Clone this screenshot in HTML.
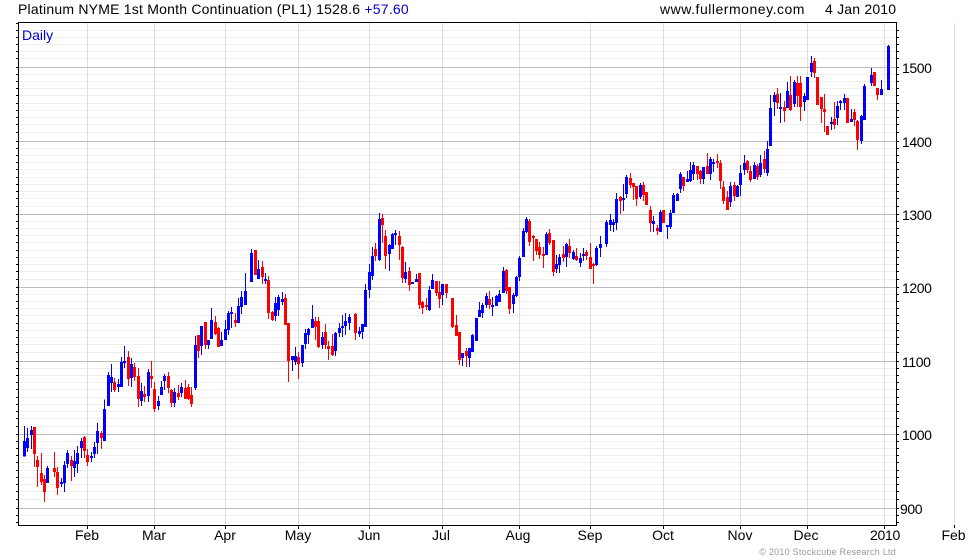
<!DOCTYPE html>
<html>
<head>
<meta charset="utf-8">
<title>Platinum NYME</title>
<style>
html,body{margin:0;padding:0;background:#fff;width:980px;height:560px;overflow:hidden}
svg{display:block}
text{font-family:"Liberation Sans",Arial,sans-serif;font-size:14px;fill:#000}
.n{letter-spacing:-.4px}
.bw{stroke:#00f;stroke-width:3;fill:none}
.bb{stroke:#00f;stroke-width:9;fill:none}
.rw{stroke:#f00;stroke-width:3;fill:none}
.rb{stroke:#f00;stroke-width:9;fill:none}
</style>
</head>
<body>
<svg width="980" height="560" viewBox="0 0 980 560" xmlns="http://www.w3.org/2000/svg" shape-rendering="crispEdges">
<path fill="none" stroke="#eee" d="M19 30.5H896M19 37.5H896M19 44.5H896M19 51.5H896M19 58.5H896M19 74.5H896M19 81.5H896M19 88.5H896M19 95.5H896M19 103.5H896M19 110.5H896M19 117.5H896M19 124.5H896M19 132.5H896M19 148.5H896M19 155.5H896M19 162.5H896M19 169.5H896M19 177.5H896M19 184.5H896M19 191.5H896M19 198.5H896M19 206.5H896M19 221.5H896M19 228.5H896M19 235.5H896M19 242.5H896M19 250.5H896M19 257.5H896M19 264.5H896M19 271.5H896M19 279.5H896M19 294.5H896M19 301.5H896M19 308.5H896M19 315.5H896M19 323.5H896M19 330.5H896M19 337.5H896M19 344.5H896M19 352.5H896M19 368.5H896M19 375.5H896M19 382.5H896M19 389.5H896M19 397.5H896M19 404.5H896M19 411.5H896M19 418.5H896M19 426.5H896M19 441.5H896M19 448.5H896M19 455.5H896M19 462.5H896M19 470.5H896M19 477.5H896M19 484.5H896M19 491.5H896M19 499.5H896M19 515.5H896"/>
<path fill="none" stroke="#ddd" d="M87.5 23V525M154.5 23V525M225.5 23V525M298.5 23V525M369.5 23V525M442.5 23V525M519.5 23V525M590.5 23V525M663.5 23V525M740.5 23V525M807.5 23V525M884.5 23V525M954.5 23V525"/>
<path fill="none" stroke="#bbb" d="M19 67.5H896M19 141.5H896M19 214.5H896M19 287.5H896M19 361.5H896M19 434.5H896M19 508.5H896"/>

<g transform="translate(20.1667 340) scale(.3333333)">
<path class="bw" d="M13 258V350M22 264V336M34 258V327M82 378V429M124 414V441M133 363V456M142 330V384M163 330V411M172 318V399M184 294V354M214 336V366M223 306V354M232 249V342M253 178V303M265 96V198M274 72V156M295 117V156M304 51V141M313 18V84M334 54V141M364 129V198M385 87V186M415 168V210M424 123V165M433 102V150M463 144V201M484 129V171"/>
<path class="bb" d="M13 303V350M22 294V324M34 270V285M82 384V429M124 426V432M133 375V429M142 339V372M163 363V384M172 339V372M184 303V324M214 348V354M223 321V342M232 273V309M253 207V303M265 105V198M274 111V129M295 132V141M304 66V141M313 63V69M334 72V114M364 153V183M385 96V168M415 183V198M424 141V165M433 108V123M463 156V189M484 141V159"/>
<path class="rw" d="M43 261V381M52 348V441M64 339V435M73 405V486M103 336V411M112 381V465M154 348V423M193 288V354M202 327V378M244 273V327M283 114V156M325 33V138M343 69V123M355 84V201M373 138V186M394 63V144M403 126V216M445 96V159M454 147V201M475 135V180M496 120V177M505 132V180M514 141V201"/>
<path class="rb" d="M43 261V342M52 360V381M64 399V426M73 417V456M103 384V396M112 396V444M154 360V378M193 291V333M202 345V366M244 279V294M283 126V150M325 51V117M343 81V111M355 108V177M373 162V171M394 108V117M403 147V207M445 108V144M454 150V189M475 159V171M496 144V177M505 141V177M514 165V192"/>
</g>

<g transform="translate(190.1667 240) scale(.3333333)">
<path class="bw" d="M16 288V450M34 258V345M55 300V327M64 204V297M94 276V318M106 240V300M115 213V285M124 201V264M145 174V249M154 153V222M166 99V195M184 27V126M205 60V117M226 99V132M256 171V243M265 165V228M277 156V195M307 348V393M316 321V375M337 315V381M346 267V327M355 264V312M367 195V264M397 276V327M436 276V348M448 249V291M457 225V291M466 219V285M478 222V270M508 261V291M517 252V297"/>
<path class="bb" d="M16 315V444M34 258V318M55 300V315M64 240V297M94 300V318M106 267V300M115 219V270M124 216V222M145 198V249M154 171V201M166 153V195M184 39V126M205 87V117M226 117V123M256 189V228M265 171V210M277 177V186M307 348V360M316 348V366M337 315V369M346 279V312M355 267V285M367 237V264M397 291V315M436 279V333M448 264V279M457 258V264M466 243V258M478 231V249M508 273V282M517 252V276"/>
<path class="rw" d="M25 285V354M46 246V327M76 228V285M85 261V321M136 219V261M196 30V105M217 63V132M235 108V237M247 213V243M286 162V255M295 249V426M325 336V417M376 231V300M385 231V324M406 252V327M415 303V360M427 282V348M496 219V300"/>
<path class="rb" d="M25 285V333M46 246V315M76 246V282M85 264V321M136 240V249M196 30V105M217 81V111M235 120V219M247 216V240M286 174V255M295 249V363M325 351V372M376 243V261M385 243V321M406 276V315M415 318V327M427 318V345M496 222V279"/>
</g>

<g transform="translate(360.1667 200) scale(.3333333)">
<path class="bw" d="M16 252V381M28 192V294M37 141V240M58 39V183M88 132V213M97 99V147M106 90V135M136 186V249M157 246V252M169 222V246M208 258V333M217 222V267M247 252V315M307 459V498M328 444V501M337 402V456M349 354V423M358 306V351M367 309V354M379 279V324M397 291V348M409 285V318M418 270V306M430 201V279M460 279V339M469 228V291M478 168V243M490 84V171M499 51V99M559 96V165"/>
<path class="bb" d="M16 270V381M28 216V270M37 168V228M58 57V180M88 135V162M97 102V147M106 99V105M136 216V237M157 246V252M169 237V246M208 270V330M217 240V267M247 252V285M307 459V474M328 444V474M337 405V456M349 354V423M358 330V351M367 315V339M379 288V315M397 315V321M409 288V318M418 282V306M430 213V279M460 285V312M469 231V288M478 174V231M490 93V171M499 57V96M559 102V165"/>
<path class="rw" d="M46 129V183M67 42V129M76 90V207M118 93V180M127 138V249M148 201V273M178 219V327M187 303V342M199 294V330M229 243V288M238 243V324M259 252V294M277 294V384M289 345V408M298 396V495M319 444V501M388 273V327M439 207V282M448 261V342M508 57V138M520 105V183M529 117V165M538 126V177"/>
<path class="rb" d="M46 147V168M67 54V75M76 108V168M118 108V135M127 141V234M148 213V255M178 219V315M187 306V324M199 315V321M229 243V279M238 276V297M259 252V279M277 294V381M289 375V408M298 396V480M319 453V468M388 297V315M439 210V273M448 261V327M508 63V126M520 108V114M529 117V153M538 141V165"/>
</g>

<g transform="translate(540.1667 160) scale(.3333333)">
<path class="bw" d="M19 216V285M49 285V339M58 282V339M79 249V321M100 270V300M121 279V321M130 264V303M169 258V318M181 228V291M199 180V261M211 162V213M220 177V216M229 99V210M250 72V153M259 45V114M301 69V117M340 168V216M361 150V216M382 195V237M391 150V207M400 99V159M412 99V123M421 36V99"/>
<path class="bb" d="M19 222V285M49 312V327M58 291V315M79 252V291M100 276V297M121 294V309M130 282V288M169 264V315M181 252V264M199 186V252M211 180V195M220 186V195M229 117V189M250 114V120M259 51V102M301 75V111M340 183V192M361 156V216M382 195V201M391 159V201M400 105V159M412 102V123M421 42V87"/>
<path class="rw" d="M10 261V324M28 207V255M40 240V348M70 258V306M88 237V294M109 264V303M139 270V300M151 249V327M160 309V372M241 108V162M271 39V84M280 69V120M289 78V138M310 66V123M319 96V135M331 138V216M352 195V225M370 150V189"/>
<path class="rb" d="M10 282V288M28 219V249M40 240V336M70 282V294M88 258V279M109 288V300M139 276V288M151 291V327M160 312V318M241 111V123M271 54V75M280 69V81M289 78V117M310 75V105M319 96V135M331 150V189M352 204V213M370 150V189"/>
</g>

<g transform="translate(680.1667 130) scale(.3333333)">
<path class="bw" d="M22 123V156M31 96V156M40 96V150M70 111V162M91 81V150M100 87V126"/>
<path class="bb" d="M22 147V156M31 120V153M40 105V132M70 111V147M91 87V132M100 96V102"/>
<path class="rw" d="M10 141V183M52 108V150M61 120V162M82 69V132M112 72V114"/>
<path class="rb" d="M10 141V168M52 108V132M61 123V147M82 108V132M112 93V99"/>
</g>

<g transform="translate(710.1667 40) scale(.3333333)">
<path class="bw" d="M61 426V501M82 435V471M91 375V468M103 345V405M133 366V417M151 345V411M172 303V408M181 165V318M193 156V228M211 159V249M232 126V204M253 120V201M283 159V213M292 111V180M304 48V111M364 231V270M382 183V255M391 180V210M403 162V210M424 207V246M454 225V312M463 132V240M484 84V138M514 120V165M535 15V150"/>
<path class="bb" d="M61 438V486M82 438V471M91 399V435M103 369V390M133 375V417M151 369V405M172 327V399M181 204V318M193 165V186M211 201V207M232 153V204M253 126V192M283 168V186M292 111V180M304 69V96M364 246V252M382 198V234M391 183V189M403 174V189M424 237V246M454 228V303M463 138V240M484 105V129M514 147V165M535 18V150"/>
<path class="rw" d="M31 360V447M40 423V492M52 453V510M73 426V483M112 360V399M121 378V426M142 372V420M163 333V399M202 144V207M223 183V246M241 108V213M262 108V201M271 108V243M313 54V114M322 111V195M334 171V249M343 162V276M352 258V285M373 186V267M412 174V249M433 207V258M442 240V330M493 96V138M502 144V180"/>
<path class="rb" d="M31 369V423M40 441V483M52 471V510M73 435V468M112 363V390M121 393V420M142 378V411M163 357V387M202 162V189M223 201V213M241 165V210M262 129V168M271 129V201M313 63V99M322 111V195M334 171V207M343 207V216M352 258V285M373 237V255M412 174V249M433 216V240M442 243V300M493 96V138M502 144V165"/>
</g>

<path fill="none" stroke="#000" d="M18.5 22V525.5M896.5 22V525.5M18 22.5H897M18 525.5H897"/>
<path fill="none" stroke="#000" d="M16 23.5H18M16 30.5H18M16 37.5H18M16 44.5H18M16 51.5H18M16 58.5H18M16 67.5H18M16 74.5H18M16 81.5H18M16 88.5H18M16 95.5H18M16 103.5H18M16 110.5H18M16 117.5H18M16 124.5H18M16 132.5H18M16 141.5H18M16 148.5H18M16 155.5H18M16 162.5H18M16 169.5H18M16 177.5H18M16 184.5H18M16 191.5H18M16 198.5H18M16 206.5H18M16 214.5H18M16 221.5H18M16 228.5H18M16 235.5H18M16 242.5H18M16 250.5H18M16 257.5H18M16 264.5H18M16 271.5H18M16 279.5H18M16 287.5H18M16 294.5H18M16 301.5H18M16 308.5H18M16 315.5H18M16 323.5H18M16 330.5H18M16 337.5H18M16 344.5H18M16 352.5H18M16 361.5H18M16 368.5H18M16 375.5H18M16 382.5H18M16 389.5H18M16 397.5H18M16 404.5H18M16 411.5H18M16 418.5H18M16 426.5H18M16 434.5H18M16 441.5H18M16 448.5H18M16 455.5H18M16 462.5H18M16 470.5H18M16 477.5H18M16 484.5H18M16 491.5H18M16 499.5H18M16 508.5H18M16 515.5H18M16 522.5H18"/>
<path fill="none" stroke="#000" d="M897 30.5H899M897 37.5H899M897 44.5H899M897 51.5H899M897 58.5H899M897 67.5H899M897 74.5H899M897 81.5H899M897 88.5H899M897 95.5H899M897 103.5H899M897 110.5H899M897 117.5H899M897 124.5H899M897 132.5H899M897 141.5H899M897 148.5H899M897 155.5H899M897 162.5H899M897 169.5H899M897 177.5H899M897 184.5H899M897 191.5H899M897 198.5H899M897 206.5H899M897 214.5H899M897 221.5H899M897 228.5H899M897 235.5H899M897 242.5H899M897 250.5H899M897 257.5H899M897 264.5H899M897 271.5H899M897 279.5H899M897 287.5H899M897 294.5H899M897 301.5H899M897 308.5H899M897 315.5H899M897 323.5H899M897 330.5H899M897 337.5H899M897 344.5H899M897 352.5H899M897 361.5H899M897 368.5H899M897 375.5H899M897 382.5H899M897 389.5H899M897 397.5H899M897 404.5H899M897 411.5H899M897 418.5H899M897 426.5H899M897 434.5H899M897 441.5H899M897 448.5H899M897 455.5H899M897 462.5H899M897 470.5H899M897 477.5H899M897 484.5H899M897 491.5H899M897 499.5H899M897 508.5H899M897 515.5H899M897 522.5H899"/>
<path fill="none" stroke="#000" d="M87.5 526V529M154.5 526V529M225.5 526V529M298.5 526V529M369.5 526V529M442.5 526V529M519.5 526V529M590.5 526V529M663.5 526V529M740.5 526V529M807.5 526V529M884.5 526V529M954.5 525V528"/>

<text x="18" y="14" style="letter-spacing:.22px">Platinum NYME 1st Month Continuation (PL1) 1528.6 <tspan style="fill:#0000d0">+57.60</tspan></text>
<text x="660" y="14" style="letter-spacing:.52px">www.fullermoney.com</text>
<text x="825" y="14" style="letter-spacing:.2px">4 Jan 2010</text>
<text x="22" y="40" style="fill:#0000d0">Daily</text>

<text class="n" x="902" y="73">1500</text>
<text class="n" x="902" y="147">1400</text>
<text class="n" x="902" y="220">1300</text>
<text class="n" x="902" y="293">1200</text>
<text class="n" x="902" y="367">1100</text>
<text class="n" x="902" y="440">1000</text>
<text class="n" x="900" y="514">900</text>

<g text-anchor="middle">
<text x="87" y="540">Feb</text>
<text x="154" y="540">Mar</text>
<text x="225" y="540">Apr</text>
<text x="298" y="540">May</text>
<text x="369" y="540">Jun</text>
<text x="441" y="540">Jul</text>
<text x="518" y="540">Aug</text>
<text x="590" y="540">Sep</text>
<text x="663" y="540">Oct</text>
<text x="740" y="540">Nov</text>
<text x="806" y="540">Dec</text>
<text x="885" y="540" style="letter-spacing:-.3px">2010</text>
<text x="953.5" y="540">Feb</text>
</g>
<text x="896" y="555" text-anchor="end" style="font-size:9px;fill:#999;letter-spacing:.24px">© 2010 Stockcube Research Ltd</text>
</svg>
</body>
</html>
